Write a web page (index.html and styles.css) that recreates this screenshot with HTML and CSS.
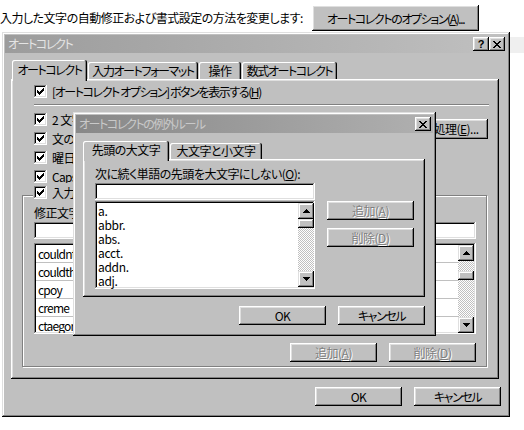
FILE: index.html
```html
<!DOCTYPE html>
<html lang="ja">
<head>
<meta charset="utf-8">
<title>オートコレクト</title>
<link rel="stylesheet" href="styles.css">
</head>
<body>
<div class="page">
  <div class="topbar">
    <span class="intro">入力した文字の自動修正および書式設定の方法を変更します:</span>
    <div class="btn opt-btn k">オートコレクトのオプション(<u>A</u>)...</div>
  </div>

  <div class="desk">
    <div class="dialog outer">
      <div class="titlebar t-outer">
        <span class="ttext k">オートコレクト</span>
        <span class="tbtns">
          <span class="tbtn q">?</span>
          <span class="tbtn"><svg width="8" height="7" viewBox="0 0 8 7" shape-rendering="crispEdges"><path d="M0 0h2v1h-2zM6 0h2v1h-2zM1 1h2v1h-2zM5 1h2v1h-2zM2 2h4v1h-4zM3 3h2v1h-2zM2 4h4v1h-4zM1 5h2v1h-2zM5 5h2v1h-2zM0 6h2v1h-2zM6 6h2v1h-2z" fill="#000"/></svg></span>
        </span>
      </div>
      <div class="tabs tabs-outer">
        <div class="tab active w1 k">オートコレクト</div>
        <div class="tab w2 k">入力オートフォーマット</div>
        <div class="tab w3">操作</div>
        <div class="tab w4 k">数式オートコレクト</div>
      </div>
      <div class="panel p-outer">
        <div class="chk row1"><span class="box"><svg width="13" height="13" viewBox="0 0 13 13" shape-rendering="crispEdges"><path d="M9 3h1v1h-1zM8 4h2v1h-2zM3 5h1v1h-1zM7 5h3v1h-3zM3 6h2v1h-2zM6 6h3v1h-3zM3 7h5v1h-5zM4 8h3v1h-3zM5 9h1v1h-1z" fill="#000"/></svg></span><span class="k">[オートコレクト オプション] ボタンを表示する(<u>H</u>)</span></div>
        <div class="sep"></div>
        <div class="opts">
          <div class="optlist">
            <div class="chk"><span class="box"><svg width="13" height="13" viewBox="0 0 13 13" shape-rendering="crispEdges"><path d="M9 3h1v1h-1zM8 4h2v1h-2zM3 5h1v1h-1zM7 5h3v1h-3zM3 6h2v1h-2zM6 6h3v1h-3zM3 7h5v1h-5zM4 8h3v1h-3zM5 9h1v1h-1z" fill="#000"/></svg></span><span>2 文字目を小文字にする [THe → The](<u>O</u>)</span></div>
            <div class="chk"><span class="box"><svg width="13" height="13" viewBox="0 0 13 13" shape-rendering="crispEdges"><path d="M9 3h1v1h-1zM8 4h2v1h-2zM3 5h1v1h-1zM7 5h3v1h-3zM3 6h2v1h-2zM6 6h3v1h-3zM3 7h5v1h-5zM4 8h3v1h-3zM5 9h1v1h-1z" fill="#000"/></svg></span><span>文の先頭文字を大文字にする [the → The](<u>S</u>)</span></div>
            <div class="chk"><span class="box"><svg width="13" height="13" viewBox="0 0 13 13" shape-rendering="crispEdges"><path d="M9 3h1v1h-1zM8 4h2v1h-2zM3 5h1v1h-1zM7 5h3v1h-3zM3 6h2v1h-2zM6 6h3v1h-3zM3 7h5v1h-5zM4 8h3v1h-3zM5 9h1v1h-1z" fill="#000"/></svg></span><span>曜日の先頭文字を大文字にする [monday → Monday](<u>N</u>)</span></div>
            <div class="chk"><span class="box"><svg width="13" height="13" viewBox="0 0 13 13" shape-rendering="crispEdges"><path d="M9 3h1v1h-1zM8 4h2v1h-2zM3 5h1v1h-1zM7 5h3v1h-3zM3 6h2v1h-2zM6 6h3v1h-3zM3 7h5v1h-5zM4 8h3v1h-3zM5 9h1v1h-1z" fill="#000"/></svg></span><span class="lat">Caps Lock キーの押し間違いを修正する(<u>L</u>)</span></div>
          </div>
          <div class="btn exc-btn">例外処理(<u>E</u>)...</div>
        </div>
        <div class="group">
          <div class="chk legend"><span class="box"><svg width="13" height="13" viewBox="0 0 13 13" shape-rendering="crispEdges"><path d="M9 3h1v1h-1zM8 4h2v1h-2zM3 5h1v1h-1zM7 5h3v1h-3zM3 6h2v1h-2zM6 6h3v1h-3zM3 7h5v1h-5zM4 8h3v1h-3zM5 9h1v1h-1z" fill="#000"/></svg></span><span>入力中に自動修正する(<u>T</u>)</span></div>
          <div class="glabels"><span class="gl1">修正文字列(<u>R</u>):</span><span>修正後の文字列(<u>W</u>):</span></div>
          <div class="ginputs"><div class="field f1"></div><div class="field f2"></div></div>
          <div class="field biglist">
            <div class="rows">
              <div class="row"><span class="c1">couldnt</span><span class="c2">couldn't</span></div>
              <div class="row"><span class="c1">couldthe</span><span class="c2">could the</span></div>
              <div class="row"><span class="c1">cpoy</span><span class="c2">copy</span></div>
              <div class="row"><span class="c1">creme</span><span class="c2">crème</span></div>
              <div class="row"><span class="c1">ctaegory</span><span class="c2">category</span></div>
            </div>
            <div class="sbar">
              <div class="sbtn"><svg width="7" height="4" viewBox="0 0 7 4" shape-rendering="crispEdges"><path d="M3 0h1v1h-1zM2 1h3v1h-3zM1 2h5v1h-5zM0 3h7v1h-7z" fill="#000"/></svg></div>
              <div class="track"><div class="thumb thumb-mid"></div></div>
              <div class="sbtn"><svg width="7" height="4" viewBox="0 0 7 4" shape-rendering="crispEdges"><path d="M0 0h7v1h-7zM1 1h5v1h-5zM2 2h3v1h-3zM3 3h1v1h-1z" fill="#000"/></svg></div>
            </div>
          </div>
          <div class="gbtns"><div class="btn dis">追加(<u>A</u>)</div><div class="btn dis">削除(<u>D</u>)</div></div>
        </div>
      </div>
      <div class="actions a-outer"><div class="btn">OK</div><div class="btn k">キャンセル</div></div>
    </div>
    <div class="side"></div>
  </div>

  <div class="dialog inner">
    <div class="titlebar t-inner">
      <span class="ttext k">オートコレクトの例外ルール</span>
      <span class="tbtns">
        <span class="tbtn"><svg width="8" height="7" viewBox="0 0 8 7" shape-rendering="crispEdges"><path d="M0 0h2v1h-2zM6 0h2v1h-2zM1 1h2v1h-2zM5 1h2v1h-2zM2 2h4v1h-4zM3 3h2v1h-2zM2 4h4v1h-4zM1 5h2v1h-2zM5 5h2v1h-2zM0 6h2v1h-2zM6 6h2v1h-2z" fill="#000"/></svg></span>
      </span>
    </div>
    <div class="tabs tabs-inner">
      <div class="tab active iw1">先頭の大文字</div>
      <div class="tab iw2">大文字と小文字</div>
    </div>
    <div class="panel p-inner">
      <div class="ilabel">次に続く単語の先頭を大文字にしない(<u>O</u>):</div>
      <div class="field iinput"></div>
      <div class="irow">
        <div class="field ilist">
          <div class="items">
            <div>a.</div><div>abbr.</div><div>abs.</div><div>acct.</div><div>addn.</div><div>adj.</div>
          </div>
          <div class="sbar">
            <div class="sbtn"><svg width="7" height="4" viewBox="0 0 7 4" shape-rendering="crispEdges"><path d="M3 0h1v1h-1zM2 1h3v1h-3zM1 2h5v1h-5zM0 3h7v1h-7z" fill="#000"/></svg></div>
            <div class="track"><div class="thumb"></div></div>
            <div class="sbtn"><svg width="7" height="4" viewBox="0 0 7 4" shape-rendering="crispEdges"><path d="M0 0h7v1h-7zM1 1h5v1h-5zM2 2h3v1h-3zM3 3h1v1h-1z" fill="#000"/></svg></div>
          </div>
        </div>
        <div class="ibtns"><div class="btn dis">追加(<u>A</u>)</div><div class="btn dis">削除(<u>D</u>)</div></div>
      </div>
    </div>
    <div class="actions a-inner"><div class="btn">OK</div><div class="btn k">キャンセル</div></div>
  </div>
</div>
</body>
</html>
```

FILE: styles.css
```css
* { box-sizing: border-box; }
html, body { margin: 0; }
body {
  background: #fff;
  font-family: "Noto Sans CJK JP", "Liberation Sans", sans-serif;
  font-size: 12px;
  line-height: 1;
  color: #000;
  font-feature-settings: "palt" 1;
  letter-spacing: -0.5px;
}
.k { letter-spacing: -1.4px; }
u { text-decoration: underline; text-underline-offset: 1px; }

.page { position: relative; width: 524px; height: 430px; overflow: hidden; }

/* ---------- generic win-classic parts ---------- */
.btn {
  display: flex; align-items: center; justify-content: center;
  width: 87px; height: 19px; flex: none;
  background: #c0c0c0;
  box-shadow: inset -1px -1px #000, inset 1px 1px #fff, inset -2px -2px #808080, inset 2px 2px #dfdfdf;
  white-space: nowrap;
}
.btn.dis { color: #808080; text-shadow: 1px 1px #fff; }

/* ---------- header ---------- */
.topbar { display: flex; height: 32px; }
.intro { flex: none; width: 312px; padding-top: 12px; white-space: nowrap; overflow: hidden; }
.btn.opt-btn { margin-top: 5px; width: 167px; height: 26px; padding-top: 1px; }

.dialog {
  background: #c0c0c0;
  padding: 3px;
  box-shadow: inset -1px -1px #000, inset 1px 1px #dfdfdf, inset -2px -2px #808080, inset 2px 2px #fff;
}
.titlebar {
  height: 18px; display: flex; align-items: center; justify-content: space-between;
  padding: 0 2px 0 2px; white-space: nowrap;
}
.t-outer { background: linear-gradient(to right, #9c9c9c, #c0c0c0); color: #e4e4e4; }
.t-inner { background: linear-gradient(to right, #888888, #b0b0b0); color: #c9c9c9; }
.tbtns { display: flex; }
.tbtn {
  width: 16px; height: 14px; display: flex; align-items: center; justify-content: center;
  background: #c0c0c0;
  box-shadow: inset -1px -1px #000, inset 1px 1px #fff, inset -2px -2px #808080, inset 2px 2px #dfdfdf;
}
.tbtn.q { font-family: "Liberation Sans", sans-serif; font-weight: bold; font-size: 11px; color: #000; padding-top: 1px; letter-spacing: 0; }

.tabs { display: flex; align-items: flex-end; position: relative; z-index: 2; }
.tab {
  height: 17px; display: flex; align-items: center; justify-content: center;
  background: #c0c0c0; white-space: nowrap; margin-right: 1px;
  border-radius: 2px 2px 0 0;
  box-shadow: inset -1px 0 #000, inset 1px 1px #fff, inset -2px 0 #808080;
}
.tab.active { height: 21px; margin-bottom: -2px; padding-bottom: 2px; }

.panel {
  background: #c0c0c0;
  box-shadow: inset -1px -1px #000, inset 1px 1px #fff, inset -2px -2px #808080, inset 2px 2px #dfdfdf;
}

.field {
  background: #fff;
  box-shadow: inset -1px -1px #fff, inset 1px 1px #808080, inset -2px -2px #dfdfdf, inset 2px 2px #000;
}

.chk { display: flex; align-items: center; height: 13px; white-space: nowrap; }
.box {
  width: 13px; height: 13px; flex: none; margin-right: 5px; background: #fff;
  box-shadow: inset -1px -1px #fff, inset 1px 1px #808080, inset -2px -2px #dfdfdf, inset 2px 2px #000;
}
.box svg { display: block; }
.lat { letter-spacing: -0.7px; }

.sbar { width: 16px; display: flex; flex-direction: column; flex: none; }
.sbtn {
  height: 16px; flex: none; display: flex; align-items: center; justify-content: center;
  background: #c0c0c0;
  box-shadow: inset -1px -1px #000, inset 1px 1px #dfdfdf, inset -2px -2px #808080, inset 2px 2px #fff;
}
.track {
  flex: 1;
  background-color: #fff;
  background-image: repeating-conic-gradient(#c0c0c0 0% 25%, #fff 0% 50%);
  background-size: 2px 2px;
}
.thumb {
  height: 9px; background: #c0c0c0;
  box-shadow: inset -1px -1px #000, inset 1px 1px #dfdfdf, inset -2px -2px #808080, inset 2px 2px #fff;
}
.thumb-mid { margin-top: 10px; }

.actions { display: flex; justify-content: flex-end; gap: 12px; }

/* ---------- outer dialog ---------- */
.desk { display: flex; }
.side { flex: 1; margin-top: 5px; height: 16px; background: #efefef; }
.outer { flex: none; margin-left: 2px; width: 508px; height: 385px; }
.t-outer .ttext { padding-left: 1px; }
.tabs-outer { height: 19px; margin-top: 7px; margin-left: 7px; }
.w1 { width: 75px; }
.w2 { width: 110px; }
.w3 { width: 42px; }
.w4 { width: 95px; }
.p-outer { margin-left: 6px; width: 488px; height: 300px; padding-top: 6px; }

.row1 { margin-left: 23px; }
.sep { margin: 6px 0 0 23px; width: 455px; height: 2px; border-top: 1px solid #808080; border-bottom: 1px solid #fff; }
.opts { display: flex; margin-top: 7px; }
.optlist { display: flex; flex-direction: column; gap: 6px; margin-left: 23px; overflow: hidden; width: 360px; }
.btn.exc-btn { margin-left: auto; margin-right: 11px; margin-top: 6px; height: 20px; }

.group {
  margin: 12px 0 0 11px; width: 465px; height: 172px;
  border: 1px solid #808080;
  box-shadow: inset 1px 1px #fff, 1px 1px #fff;
  padding: 0 10px 0 11px;
}
.legend { margin: -10px 0 0 -1px; padding: 0 2px 0 1px; background: #c0c0c0; width: fit-content; }
.glabels { display: flex; margin-top: 7px; height: 13px; align-items: center; white-space: nowrap; }
.gl1 { width: 106px; }
.ginputs { display: flex; gap: 6px; margin-top: 3px; }
.f1 { width: 100px; height: 17px; }
.f2 { flex: 1; height: 17px; }
.biglist { display: flex; margin-top: 4px; height: 91px; padding: 2px 2px 1px 2px; }
.rows { flex: 1; overflow: hidden; }
.row { display: flex; height: 18px; border-bottom: 1px solid #c0c0c0; }
.row span { display: flex; align-items: center; padding-left: 2px; white-space: nowrap; overflow: hidden; letter-spacing: -0.8px; }
.c1 { width: 104px; border-right: 1px solid #c0c0c0; }
.c2 { flex: 1; }
.gbtns { display: flex; justify-content: flex-end; gap: 12px; margin-top: 9px; }

.a-outer { margin-top: 8px; padding-right: 6px; }

/* ---------- inner dialog (overlay) ---------- */
.inner { position: absolute; left: 73px; top: 112px; width: 363px; height: 224px; }
.t-inner .ttext { padding-left: 1px; }
.tabs-inner { height: 18px; margin-top: 8px; margin-left: 7px; }
.tabs-inner .tab { height: 16px; }
.tabs-inner .tab.active { height: 20px; }
.iw1 { width: 86px; }
.iw2 { width: 92px; }
.p-inner { margin-left: 7px; width: 342px; height: 138px; padding: 8px 0 0 12px; }
.ilabel { height: 13px; display: flex; align-items: center; white-space: nowrap; }
.iinput { margin-top: 3px; width: 220px; height: 17px; }
.irow { display: flex; margin-top: 1px; }
.ilist { display: flex; width: 220px; height: 88px; padding: 2px 1px 2px 2px; }
.items { flex: 1; padding: 1px 0 0 1px; letter-spacing: -0.3px; }
.items div { height: 14px; display: flex; align-items: center; }
.ibtns { display: flex; flex-direction: column; gap: 8px; margin-left: 12px; }
.a-inner { margin-top: 9px; padding-right: 8px; }
```
